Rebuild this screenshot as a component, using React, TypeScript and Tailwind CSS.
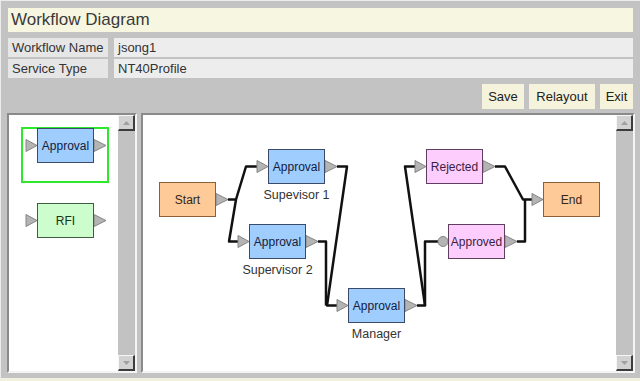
import React from "react";

const FONT = { fontFamily: '"Liberation Sans", Arial, sans-serif' };

type Kind = "blue" | "pink" | "orange" | "green";

const kindCls: Record<Kind, string> = {
  blue: "bg-[#9fcdfd] border-[#3b4a66] text-[#14203c]",
  pink: "bg-[#fdcdfd] border-[#5e3f5e] text-[#3a1d3f]",
  orange: "bg-[#fdca98] border-[#8c6036] text-[#33261a]",
  green: "bg-[#cdfdcd] border-[#3f5e3f] text-[#1a331a]",
};

type NodeDef = { id: string; text: string; kind: Kind; x: number; y: number; pos: string; inPort?: "tri" | "circle" | "none"; outPort?: boolean };

const nodes: NodeDef[] = [
  { id: "start", text: "Start", kind: "orange", x: 16, y: 67, pos: "left-[16px] top-[67px]", inPort: "none", outPort: true },
  { id: "a1", text: "Approval", kind: "blue", x: 125, y: 34, pos: "left-[125px] top-[34px]", inPort: "tri", outPort: true },
  { id: "a2", text: "Approval", kind: "blue", x: 106, y: 109, pos: "left-[106px] top-[109px]", inPort: "tri", outPort: true },
  { id: "mgr", text: "Approval", kind: "blue", x: 205, y: 173, pos: "left-[205px] top-[173px]", inPort: "tri", outPort: true },
  { id: "rej", text: "Rejected", kind: "pink", x: 283, y: 34, pos: "left-[283px] top-[34px]", inPort: "tri", outPort: true },
  { id: "apr", text: "Approved", kind: "pink", x: 305, y: 109, pos: "left-[305px] top-[109px]", inPort: "circle", outPort: true },
  { id: "end", text: "End", kind: "orange", x: 400, y: 67, pos: "left-[400px] top-[67px]", inPort: "tri", outPort: false },
];

const labels = [
  { text: "Supevisor 1", pos: "left-[125px] top-[73px]" },
  { text: "Supervisor 2", pos: "left-[106px] top-[148px]" },
  { text: "Manager", pos: "left-[205px] top-[212px]" },
];

const W = 57;
const H = 35;

function inTri(x: number, cy: number) {
  return `${x - 11},${cy - 6} ${x},${cy} ${x - 11},${cy + 6}`;
}
function outTri(x: number, cy: number) {
  return `${x},${cy - 6} ${x + 12},${cy} ${x},${cy + 6}`;
}

function Box({ text, kind, cls }: { text: string; kind: Kind; cls: string }) {
  return (
    <div
      className={`absolute ${cls} w-[57px] h-[35px] border flex items-center justify-center text-[12px] leading-none ${kindCls[kind]}`}
      style={FONT}
    >
      {text}
    </div>
  );
}

function ScrollBtn({ dir }: { dir: "up" | "down" }) {
  return (
    <div className="w-[17px] h-[16px] bg-[#d2d2d2] border-t border-l border-t-[#f6f6f6] border-l-[#f6f6f6] border-r-2 border-b-2 border-r-[#3c3c3c] border-b-[#3c3c3c] flex items-center justify-center">
      <svg width="7" height="4" viewBox="0 0 7 4">
        <polygon points={dir === "up" ? "0,4 7,4 3.5,0" : "0,0 7,0 3.5,4"} fill="#a0a0a0" />
      </svg>
    </div>
  );
}

function ScrollBar() {
  return (
    <div className="w-[17px] h-full bg-[#c2c2c2] flex flex-col justify-between">
      <ScrollBtn dir="up" />
      <ScrollBtn dir="down" />
    </div>
  );
}

const lines: string[] = [
  // start -> junction -> a1 / a2
  "85,84.5 93,84.5 103,51.5 114,51.5",
  "93,84.5 86,126.5 95,126.5",
  // a1 -> manager
  "194,51.5 204,51.5 184,190.5 194,190.5",
  // a2 -> manager
  "175,126.5 183,126.5 183,190.5",
  // manager -> rejected / approved
  "274,190.5 282,190.5 262,51.5 272,51.5",
  "282,190.5 282,126.5 295,126.5",
  // rejected -> end
  "352,51.5 362,51.5 380,84.5 389,84.5",
  // approved -> end
  "374,126.5 382,126.5 382,84.5",
];

function Diagram() {
  return (
    <div className="relative flex-1 h-full bg-white overflow-hidden">
      <svg className="absolute left-0 top-0" width="474" height="256">
        {lines.map((p, i) => (
          <polyline key={i} points={p} fill="none" stroke="#111" strokeWidth="2.5" strokeLinejoin="round" />
        ))}
        {nodes.map((n) => {
          const cy = n.y + H / 2;
          return (
            <g key={n.id}>
              {n.inPort === "tri" && <polygon points={inTri(n.x, cy)} fill="#b4b4b4" stroke="#858585" strokeWidth="1" />}
              {n.inPort === "circle" && <circle cx={n.x - 5} cy={cy} r="5" fill="#b4b4b4" stroke="#858585" strokeWidth="1" />}
              {n.outPort && <polygon points={outTri(n.x + W, cy)} fill="#b4b4b4" stroke="#858585" strokeWidth="1" />}
            </g>
          );
        })}
      </svg>
      {nodes.map((n) => (
        <Box key={n.id} text={n.text} kind={n.kind} cls={n.pos} />
      ))}
      {labels.map((l) => (
        <div key={l.text} className={`absolute ${l.pos} w-[57px] flex justify-center text-[12.5px] leading-[14px] text-[#333] whitespace-nowrap`} style={FONT}>
          {l.text}
        </div>
      ))}
    </div>
  );
}

function Palette() {
  return (
    <div className="relative w-[109px] h-full bg-white overflow-hidden">
      <div className="absolute left-[12px] top-[12px] w-[88px] h-[56px] border-2 border-[#2ee82e]" />
      <svg className="absolute left-0 top-0" width="109" height="256">
        <polygon points={inTri(28, 30.5)} fill="#b4b4b4" stroke="#858585" strokeWidth="1" />
        <polygon points={outTri(85, 30.5)} fill="#b4b4b4" stroke="#858585" strokeWidth="1" />
        <polygon points={inTri(28, 105.5)} fill="#b4b4b4" stroke="#858585" strokeWidth="1" />
        <polygon points={outTri(85, 105.5)} fill="#b4b4b4" stroke="#858585" strokeWidth="1" />
      </svg>
      <Box text="Approval" kind="blue" cls="left-[28px] top-[13px]" />
      <Box text="RFI" kind="green" cls="left-[28px] top-[88px]" />
    </div>
  );
}

function Panel({ children, cls }: { children: React.ReactNode; cls: string }) {
  return (
    <div className={`${cls} h-full flex border-2 border-t-[#8a8a8a] border-l-[#8a8a8a] border-r-[#f4f4f4] border-b-[#f4f4f4]`}>
      {children}
    </div>
  );
}

export default function App() {
  return (
    <div
      className="w-[640px] h-[381px] bg-[#c3c3c3] border-t border-l border-t-[#ececec] border-l-[#ececec] border-b-[3px] border-b-[#f2f1e0] flex flex-col pl-[6px] pr-[5px] pt-[7px] text-[#333]"
      style={FONT}
    >
      <div className="ml-[1px] mr-[2px] h-[24px] shrink-0 bg-[#f7f6e1] flex items-center pl-[3px] text-[17px] text-[#3a3a3a]">
        Workflow Diagram
      </div>
      <div className="ml-[1px] mr-[2px] mt-[6px] h-[19px] shrink-0 flex gap-[6px] text-[13px]">
        <div className="w-[100px] bg-[#e6e6e6] flex items-center pl-[4px]">Workflow Name</div>
        <div className="flex-1 bg-[#ededed] flex items-center pl-[4px]">jsong1</div>
      </div>
      <div className="ml-[1px] mr-[2px] mt-[2px] h-[19px] shrink-0 flex gap-[6px] text-[13px]">
        <div className="w-[100px] bg-[#e6e6e6] flex items-center pl-[4px]">Service Type</div>
        <div className="flex-1 bg-[#ededed] flex items-center pl-[4px]">NT40Profile</div>
      </div>
      <div className="mr-[2px] mt-[6px] h-[25px] shrink-0 flex justify-end gap-[5px] text-[13px] text-[#222]">
        <div className="w-[42px] bg-[#f5f3dc] flex items-center justify-center">Save</div>
        <div className="w-[66px] bg-[#f5f3dc] flex items-center justify-center">Relayout</div>
        <div className="w-[33px] bg-[#f5f3dc] flex items-center justify-center">Exit</div>
      </div>
      <div className="mt-[4px] h-[260px] shrink-0 flex gap-[4px]">
        <Panel cls="w-[130px]">
          <Palette />
          <ScrollBar />
        </Panel>
        <Panel cls="flex-1">
          <Diagram />
          <ScrollBar />
        </Panel>
      </div>
    </div>
  );
}
